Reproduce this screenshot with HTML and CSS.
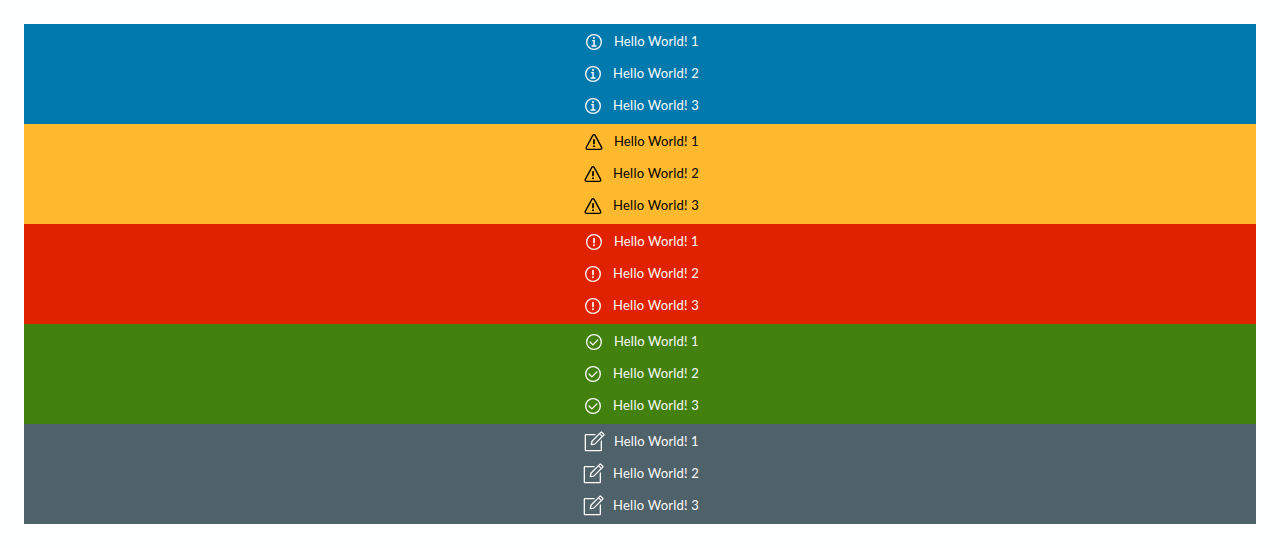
FILE: index.html
```
<!DOCTYPE html>
<html lang="en">
<head>
<meta charset="utf-8">
<title>Alerts</title>
<link rel="stylesheet" href="styles.css">
</head>
<body>
<svg class="sprite" aria-hidden="true">
<symbol id="info" viewBox="0 0 36 36"><circle cx="17.9" cy="12" r="1.6"/><path d="M21 23h-1.8v-8H16a1 1 0 0 0 0 2h1v6h-2a1 1 0 1 0 0 2h6a1 1 0 0 0 0-2z"/><circle class="line" cx="18" cy="18" r="11"/></symbol>
<symbol id="warning" viewBox="0 0 36 36"><path d="M30.33 25.54 20.59 7.6a3 3 0 0 0-5.27 0L5.57 25.54A3 3 0 0 0 8.21 30h19.48a3 3 0 0 0 2.64-4.46zm-1.78 1.94a1 1 0 0 1-.86.49H8.21a1 1 0 0 1-.88-1.48l9.74-17.94a1 1 0 0 1 1.76 0l9.74 17.94a1 1 0 0 1-.02.99z"/><path d="M18 21.5a1.3 1.3 0 0 1-1.3-1.3v-5.5a1.3 1.3 0 1 1 2.6 0v5.5a1.3 1.3 0 0 1-1.3 1.3z"/><circle cx="18" cy="24.5" r="1.5"/></symbol>
<symbol id="danger" viewBox="0 0 36 36"><circle class="line" cx="18" cy="18" r="11"/><path d="M18 20.07a1.3 1.3 0 0 1-1.3-1.3v-6a1.3 1.3 0 1 1 2.6 0v6a1.3 1.3 0 0 1-1.3 1.3z"/><circle cx="17.95" cy="23.02" r="1.5"/></symbol>
<symbol id="success" viewBox="0 0 36 36"><circle class="line" cx="18" cy="18" r="11"/><path d="m16.34 23.74-5-5a1 1 0 0 1 1.41-1.41l3.59 3.59 6.78-6.78a1 1 0 0 1 1.41 1.41z"/></symbol>
<symbol id="note" viewBox="0 0 36 36"><path d="M28 30H6V8h13.22l2-2H6a2 2 0 0 0-2 2v22a2 2 0 0 0 2 2h22a2 2 0 0 0 2-2V15l-2 2z"/><path d="m33.53 5.84-3.37-3.37a1.61 1.61 0 0 0-2.28 0L14.17 16.26l-1.11 4.81A1.61 1.61 0 0 0 14.63 23a1.69 1.69 0 0 0 .37 0l4.85-1.07L33.53 8.12a1.61 1.61 0 0 0 0-2.28zM18.81 20.08l-3.66.81.85-3.63L26.32 6.87l2.82 2.82zM30.27 8.56l-2.82-2.82L29 4.16 31.84 7z"/></symbol>
</svg>
<main class="alerts">
<section class="group info"><div class="item"><svg class="icon"><use href="#info"/></svg><span class="text">Hello World! 1</span></div><div class="item"><svg class="icon"><use href="#info"/></svg><span class="text">Hello World! 2</span></div><div class="item"><svg class="icon"><use href="#info"/></svg><span class="text">Hello World! 3</span></div></section>
<section class="group warning"><div class="item"><svg class="icon"><use href="#warning"/></svg><span class="text">Hello World! 1</span></div><div class="item"><svg class="icon"><use href="#warning"/></svg><span class="text">Hello World! 2</span></div><div class="item"><svg class="icon"><use href="#warning"/></svg><span class="text">Hello World! 3</span></div></section>
<section class="group danger"><div class="item"><svg class="icon"><use href="#danger"/></svg><span class="text">Hello World! 1</span></div><div class="item"><svg class="icon"><use href="#danger"/></svg><span class="text">Hello World! 2</span></div><div class="item"><svg class="icon"><use href="#danger"/></svg><span class="text">Hello World! 3</span></div></section>
<section class="group success"><div class="item"><svg class="icon"><use href="#success"/></svg><span class="text">Hello World! 1</span></div><div class="item"><svg class="icon"><use href="#success"/></svg><span class="text">Hello World! 2</span></div><div class="item"><svg class="icon"><use href="#success"/></svg><span class="text">Hello World! 3</span></div></section>
<section class="group neutral"><div class="item"><svg class="icon"><use href="#note"/></svg><span class="text">Hello World! 1</span></div><div class="item"><svg class="icon"><use href="#note"/></svg><span class="text">Hello World! 2</span></div><div class="item"><svg class="icon"><use href="#note"/></svg><span class="text">Hello World! 3</span></div></section>
</main>
</body>
</html>
```
FILE: styles.css
```
body { margin: 0; background: #fcfffe; font: 13px/24px Metropolis, Lato, sans-serif; }
.sprite { display: none; }
.alerts { padding: 24px; }
.group { height: 100px; box-sizing: border-box; padding: 6px 0; display: flex; flex-direction: column; gap: 8px; color: #fafafa; }
.item { display: flex; justify-content: center; align-items: center; gap: 8px; height: 24px; }
.icon { width: 24px; height: 24px; fill: currentColor; }
.text { width: 86px; padding-bottom: 2px; letter-spacing: .24px; white-space: nowrap; }
.item:first-child .text { width: 84px; letter-spacing: .14px; }
.line { fill: none; stroke: currentColor; stroke-width: 2; }
.info { background: #0079ad; }
.warning { background: #ffb92e; color: #000; }
.danger { background: #e02200; }
.success { background: #42810e; }
.neutral { background: #4f6169; }
```
